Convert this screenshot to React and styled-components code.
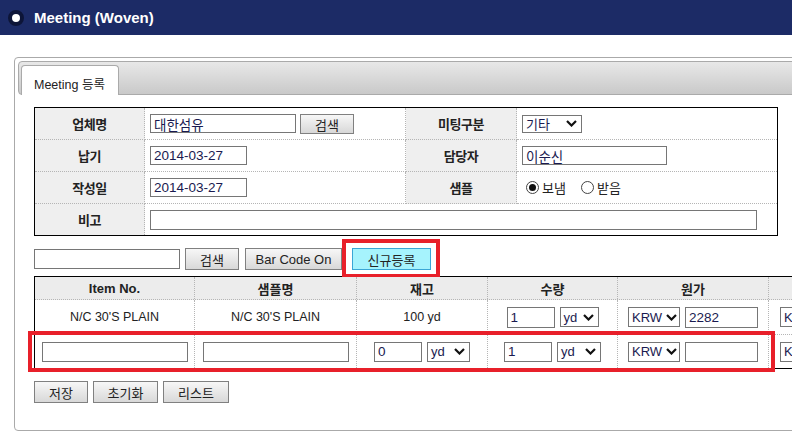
import React from 'react';
import styled, { createGlobalStyle } from 'styled-components';

const GlobalStyle = createGlobalStyle`
  html, body {
    margin: 0;
    padding: 0;
    background: #fff;
    overflow: hidden;
  }
  body {
    font-family: "Liberation Sans", "Noto Sans CJK KR", sans-serif;
    color: #222;
  }
  *, *::before, *::after { box-sizing: border-box; }
`;

const Header = styled.div`
  height: 35px;
  background: #1c2b66;
  display: flex;
  align-items: center;
  padding-left: 8px;
  gap: 10px;
`;

const Bullet = styled.span`
  width: 16px;
  height: 16px;
  border-radius: 50%;
  background: #fff;
  border: 4px solid #0d1538;
`;

const Title = styled.h1`
  margin: 0;
  font-size: 15px;
  font-weight: 700;
  color: #fff;
`;

const Panel = styled.div`
  margin: 22px 0 0 14px;
  width: 820px;
  border: 1px solid #aaa;
  border-radius: 4px;
  padding: 3px 3px 27px;
`;

const TabBar = styled.div`
  height: 34px;
  border: 1px solid #aaa;
  border-radius: 4px;
  background: linear-gradient(#e8e8e8, #c9c9c9);
  padding: 3px 0 0 2px;
  display: flex;
`;

const Tab = styled.div`
  width: 98px;
  height: 30px;
  margin-bottom: -1px;
  background: #fff;
  border: 1px solid #aaa;
  border-bottom: none;
  border-radius: 4px 4px 0 0;
  font-size: 12.5px;
  padding: 8px 0 0 12px;
  color: #222;
`;

const Content = styled.div`
  padding: 12px 0 0 16px;
`;

const FormGrid = styled.div`
  width: 744px;
  border: 1px solid #000;
  display: grid;
  grid-template-columns: 110px 261px 111px 260px;
  grid-template-rows: 32px 32px 32px 31px;
`;

const Label = styled.div`
  background: #efefef;
  display: flex;
  align-items: center;
  justify-content: center;
  font-size: 13px;
  font-weight: 700;
  letter-spacing: -0.5px;
  border-right: 1px dotted #b5b5b5;
  border-bottom: ${p => (p.$last ? 'none' : '1px dotted #b5b5b5')};
`;

const Value = styled.div`
  display: flex;
  align-items: center;
  gap: 4px;
  padding-left: 5px;
  grid-column: ${p => (p.$span ? `span ${p.$span}` : 'auto')};
  border-right: ${p => (p.$divider ? '1px dotted #b5b5b5' : 'none')};
  border-bottom: ${p => (p.$last ? 'none' : '1px dotted #b5b5b5')};
`;

const TextInput = styled.input`
  width: ${p => p.$w}px;
  height: ${p => p.$h || 19}px;
  border: 1px solid #767676;
  padding: 0 3px;
  font-family: "Liberation Sans", "Noto Sans CJK KR", sans-serif;
  font-size: 13.5px;
  color: #1a1a50;
  background: #fff;
  outline: none;
`;

const SelectBox = styled.div`
  width: ${p => p.$w}px;
  height: ${p => p.$h || 19}px;
  border: 1px solid #767676;
  display: flex;
  align-items: center;
  justify-content: ${p => (p.$spread ? 'space-between' : 'flex-start')};
  gap: 4px;
  padding: 0 4px 0 3px;
  font-size: 13px;
  color: #1a1a50;
  background: #fff;
  white-space: nowrap;
  overflow: hidden;
  svg { flex-shrink: 0; }
`;

const Button = styled.button`
  width: ${p => p.$w}px;
  height: ${p => p.$h || 22}px;
  padding: 0;
  border: 1px solid ${p => (p.$primary ? '#3aa6d6' : '#808080')};
  background: ${p => (p.$primary ? '#a6f3fd' : 'linear-gradient(#f7f7f7, #d8d8d8)')};
  font-family: "Liberation Sans", "Noto Sans CJK KR", sans-serif;
  font-size: 13px;
  color: #222;
`;

const Highlight = styled.div`
  position: relative;
  display: flex;
  &::after {
    content: '';
    position: absolute;
    top: -9px;
    left: -10px;
    right: -9px;
    bottom: -8px;
    border: 4px solid #e8202a;
    pointer-events: none;
  }
`;

const RadioGroup = styled.div`
  display: flex;
  align-items: center;
  gap: 3px;
  padding-left: 4px;
  font-size: 13px;
  color: #222;
`;

const RadioDot = styled.span`
  width: 13px;
  height: 13px;
  border-radius: 50%;
  border: 1px solid #444;
  background: #fff;
  display: inline-flex;
  align-items: center;
  justify-content: center;
  margin-left: ${p => (p.$gap ? '12px' : '0')};
  &::after {
    content: '';
    width: 7px;
    height: 7px;
    border-radius: 50%;
    background: ${p => (p.$on ? '#111' : 'transparent')};
  }
`;

const Toolbar = styled.div`
  display: flex;
  align-items: center;
  margin-top: 12px;
  height: 22px;
`;

const DataTable = styled.div`
  margin-top: 6px;
  width: 860px;
  border-top: 1px solid #000;
  border-bottom: 1px solid #000;
  border-left: 1px solid #000;
`;

const Row = styled.div`
  position: relative;
  display: grid;
  grid-template-columns: 160px 162px 131px 130px 151px 125px;
  height: ${p => p.$h}px;
  background: ${p => (p.$head ? '#ececec' : '#fff')};
  border-bottom: ${p => (p.$last ? 'none' : '1px dotted #b5b5b5')};
  &::after {
    content: '';
    display: ${p => (p.$marked ? 'block' : 'none')};
    position: absolute;
    top: -4px;
    left: -7px;
    width: 747px;
    height: 41px;
    border: 4px solid #e8202a;
    pointer-events: none;
  }
`;

const Cell = styled.div`
  display: flex;
  align-items: center;
  justify-content: ${p => (p.$start ? 'flex-start' : 'center')};
  padding-left: ${p => (p.$start ? '11px' : '0')};
  gap: 5px;
  border-right: 1px dotted #b5b5b5;
  font-size: ${p => (p.$head ? '13px' : '12.5px')};
  font-weight: ${p => (p.$head ? 700 : 400)};
  color: #222;
  white-space: nowrap;
  overflow: hidden;
`;

const Footer = styled.div`
  display: flex;
  gap: 5px;
  margin-top: 12px;
`;

const Chevron = () => (
  <svg width="11" height="7" viewBox="0 0 11 7">
    <polyline points="1,1 5.5,5.5 10,1" fill="none" stroke="#111" strokeWidth="2.2" />
  </svg>
);

const Select = ({ label, w, h, spread }) => (
  <SelectBox $w={w} $h={h} $spread={spread}>
    <span>{label}</span>
    <Chevron />
  </SelectBox>
);

const App = () => (
  <>
    <GlobalStyle />
    <Header>
      <Bullet />
      <Title>Meeting (Woven)</Title>
    </Header>
    <Panel>
      <TabBar>
        <Tab>Meeting 등록</Tab>
      </TabBar>
      <Content>
        <FormGrid>
          <Label>업체명</Label>
          <Value $divider>
            <TextInput $w={146} $h={19} defaultValue="대한섬유" />
            <Button $w={54} $h={20}>검색</Button>
          </Value>
          <Label>미팅구분</Label>
          <Value>
            <Select label="기타" w={60} h={18} spread />
          </Value>

          <Label>납기</Label>
          <Value $divider>
            <TextInput $w={97} $h={19} defaultValue="2014-03-27" />
          </Value>
          <Label>담당자</Label>
          <Value>
            <TextInput $w={145} $h={19} defaultValue="이순신" />
          </Value>

          <Label>작성일</Label>
          <Value $divider>
            <TextInput $w={97} $h={19} defaultValue="2014-03-27" />
          </Value>
          <Label>샘플</Label>
          <Value>
            <RadioGroup>
              <RadioDot $on />
              <span>보냄</span>
              <RadioDot $gap />
              <span>받음</span>
            </RadioGroup>
          </Value>

          <Label $last>비고</Label>
          <Value $span={3} $last>
            <TextInput $w={607} $h={20} />
          </Value>
        </FormGrid>

        <Toolbar>
          <TextInput $w={146} $h={20} />
          <Button $w={54} style={{ marginLeft: 5 }}>검색</Button>
          <Button $w={97} style={{ marginLeft: 6 }}>Bar Code On</Button>
          <Highlight style={{ marginLeft: 10 }}>
            <Button $w={79} $primary>신규등록</Button>
          </Highlight>
        </Toolbar>

        <DataTable>
          <Row $h={23} $head>
            <Cell $head>Item No.</Cell>
            <Cell $head>샘플명</Cell>
            <Cell $head>재고</Cell>
            <Cell $head>수량</Cell>
            <Cell $head>원가</Cell>
            <Cell $head />
          </Row>
          <Row $h={35}>
            <Cell>N/C 30'S PLAIN</Cell>
            <Cell>N/C 30'S PLAIN</Cell>
            <Cell>100 yd</Cell>
            <Cell>
              <TextInput $w={48} $h={21} defaultValue="1" />
              <Select label="yd" w={39} h={20} spread />
            </Cell>
            <Cell>
              <Select label="KRW" w={52} h={20} />
              <TextInput $w={73} $h={21} defaultValue="2282" />
            </Cell>
            <Cell $start>
              <Select label="KRW" w={52} h={20} />
            </Cell>
          </Row>
          <Row $h={33} $last $marked>
            <Cell>
              <TextInput $w={146} $h={20} />
            </Cell>
            <Cell>
              <TextInput $w={146} $h={20} />
            </Cell>
            <Cell>
              <TextInput $w={48} $h={20} defaultValue="0" />
              <Select label="yd" w={43} h={20} spread />
            </Cell>
            <Cell>
              <TextInput $w={48} $h={20} defaultValue="1" />
              <Select label="yd" w={44} h={20} spread />
            </Cell>
            <Cell>
              <Select label="KRW" w={52} h={20} />
              <TextInput $w={73} $h={20} />
            </Cell>
            <Cell $start>
              <Select label="KRW" w={52} h={20} />
            </Cell>
          </Row>
        </DataTable>

        <Footer>
          <Button $w={54}>저장</Button>
          <Button $w={65}>초기화</Button>
          <Button $w={66}>리스트</Button>
        </Footer>
      </Content>
    </Panel>
  </>
);

export default App;
